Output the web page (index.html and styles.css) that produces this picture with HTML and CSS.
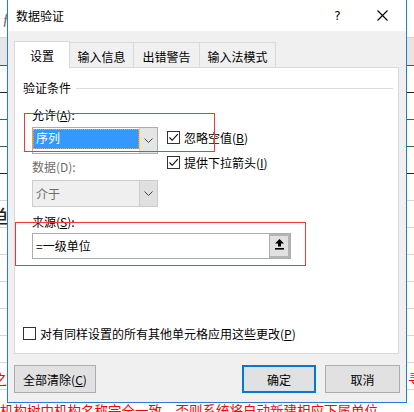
FILE: index.html
```html
<!DOCTYPE html>
<html lang="zh-CN">
<head>
<meta charset="utf-8">
<title>数据验证</title>
<link rel="stylesheet" href="styles.css">
</head>
<body>
<div class="screen">
  <div class="sheet">
    <div class="r-formula"><span class="fx">ƒ</span></div>
    <div class="r-head"></div>
    <div class="r r-dark"></div>
    <div class="r r-green"></div>
    <div class="r r-green"></div>
    <div class="r r-dark"></div>
    <div class="r"></div>
    <div class="r"><span class="big">单</span></div>
    <div class="r"></div>
    <div class="r"></div>
    <div class="r"></div>
    <div class="r"></div>
    <div class="r"></div>
    <div class="r red-row"><span class="red-l">之</span><span class="red-r">寻</span></div>
    <div class="r-text">机构树中机构名称完全一致，否则系统将自动新建相应下属单位</div>
  </div>

  <div class="dialog">
    <div class="titlebar">
      <div class="title">数据验证</div>
      <div class="cap cap-help">?</div>
      <div class="cap cap-close">
        <svg width="11" height="11" viewBox="0 0 11 11"><path d="M0.5 0.5 L10.5 10.5 M10.5 0.5 L0.5 10.5" stroke="#000" stroke-width="1.1" fill="none"/></svg>
      </div>
    </div>
    <div class="body">
      <div class="tabs">
        <div class="tab active">设置</div>
        <div class="tab t2">输入信息</div>
        <div class="tab t3">出错警告</div>
        <div class="tab t4">输入法模式</div>
      </div>
      <div class="panel">
        <div class="group"><span>验证条件</span><div class="rule"></div></div>
        <div class="form">
          <div class="allow-row">
            <div class="col-left">
              <div class="label">允许(<u>A</u>):</div>
              <div class="select s-active">
                <div class="val"><span class="hl">序列</span></div>
                <div class="drop"><svg width="9" height="5" viewBox="0 0 9 5"><path d="M0.5 0.5 L4.5 4.5 L8.5 0.5" stroke="#444" stroke-width="1" fill="none"/></svg></div>
              </div>
              <div class="label label-gap disabled">数据(D):</div>
              <div class="select s-disabled">
                <div class="val"><span class="txt">介于</span></div>
                <div class="drop"><svg width="9" height="5" viewBox="0 0 9 5"><path d="M0.5 0.5 L4.5 4.5 L8.5 0.5" stroke="#444" stroke-width="1" fill="none"/></svg></div>
              </div>
            </div>
            <div class="col-right">
              <div class="check">
                <div class="cb"><svg width="11" height="11" viewBox="0 0 11 11"><path d="M1.5 5.5 L4.2 8.3 L9.8 2.2" stroke="#000" stroke-width="1.1" fill="none"/></svg></div>
                <span>忽略空值(<u>B</u>)</span>
              </div>
              <div class="check check2">
                <div class="cb"><svg width="11" height="11" viewBox="0 0 11 11"><path d="M1.5 5.5 L4.2 8.3 L9.8 2.2" stroke="#000" stroke-width="1.1" fill="none"/></svg></div>
                <span>提供下拉箭头(<u>I</u>)</span>
              </div>
            </div>
          </div>
          <div class="label label-src">来源(<u>S</u>):</div>
          <div class="input">
            <div class="input-text">=一级单位</div>
            <div class="pick">
              <svg width="9" height="11" viewBox="0 0 9 11"><path d="M4.5 0 L9 4.5 H6 V7.5 H3 V4.5 H0 Z" fill="#000"/><rect x="0" y="9" width="9" height="1.6" fill="#000"/></svg>
            </div>
          </div>
        </div>
        <div class="check check-all">
          <div class="cb"></div>
          <span>对有同样设置的所有其他单元格应用这些更改(<u>P</u>)</span>
        </div>
      </div>
      <div class="buttons">
        <div class="btn btn-clear">全部清除(<u>C</u>)</div>
        <div class="btn-group">
          <div class="btn btn-ok">确定</div>
          <div class="btn btn-cancel">取消</div>
        </div>
      </div>
    </div>
  </div>

  <div class="mark mark-allow"></div>
  <div class="mark mark-source"></div>
</div>
</body>
</html>
```

FILE: styles.css
```css
html, body {
  margin: 0;
  padding: 0;
}
body {
  width: 414px;
  height: 412px;
  overflow: hidden;
  background: #fff;
  font-family: "Noto Sans CJK SC", "Microsoft YaHei", "Noto Sans", sans-serif;
  font-size: 12px;
  color: #000;
}
u {
  text-decoration: underline;
  text-underline-offset: 1px;
}
.screen {
  position: relative;
  width: 414px;
  height: 412px;
  overflow: hidden;
}

/* background spreadsheet */
.sheet {
  display: flex;
  flex-direction: column;
  height: 412px;
}
.sheet > div {
  flex: none;
}
.r-formula {
  height: 37px;
  border-bottom: 1px solid #d4d4d4;
  background: #fff;
  display: flex;
  align-items: center;
}
.fx {
  padding-left: 2px;
  font-family: "Liberation Serif", serif;
  font-style: italic;
  font-size: 16px;
  color: #666;
}
.r-head {
  height: 27px;
  background: #e6e6e6;
  border-bottom: 1px solid #1e7145;
}
.r {
  height: 26px;
  border-bottom: 1px solid #d6d6d6;
  display: flex;
  justify-content: space-between;
  align-items: center;
  white-space: nowrap;
}
.r-dark { border-bottom-color: #222; }
.r-green { border-bottom-color: #217346; }
.big {
  font-size: 22px;
  margin-left: -13px;
  margin-top: 4px;
  color: #222;
}
.red-row {
  color: #ff0000;
  font-size: 14px;
}
.red-l { margin-left: -7px; margin-top: 4px; }
.red-r { margin-right: -8px; margin-top: 4px; }
.r-text {
  padding-top: 12px;
  font-size: 13.5px;
  line-height: 16px;
  color: #ff0000;
  white-space: nowrap;
}

/* dialog window */
.dialog {
  position: absolute;
  left: 7px;
  top: 0;
  width: 400px;
  height: 403px;
  box-sizing: border-box;
  border: 1px solid #2b7bd5;
  border-top: none;
  background: #f0f0f0;
  display: flex;
  flex-direction: column;
}
.titlebar {
  height: 31px;
  flex: none;
  background: #fff;
  display: flex;
  align-items: center;
  padding-left: 8px;
}
.title {
  flex: 1;
  line-height: 16px;
}
.cap {
  width: 45px;
  height: 31px;
  display: flex;
  align-items: center;
  justify-content: center;
}
.cap-help {
  font-family: "DejaVu Sans", sans-serif;
  font-size: 12px;
}
.cap-close {
  margin-right: 1px;
}
.body {
  flex: 1;
  padding: 10px 7px 9px 6px;
  display: flex;
  flex-direction: column;
}

/* tabs */
.tabs {
  display: flex;
  align-items: flex-end;
  height: 26px;
  flex: none;
  position: relative;
  z-index: 1;
}
.tab {
  height: 25px;
  box-sizing: border-box;
  border: 1px solid #d9d9d9;
  border-left: none;
  border-bottom: none;
  background: #f0f0f0;
  display: flex;
  align-items: center;
  justify-content: center;
  padding-top: 2px;
}
.tab.active {
  width: 56px;
  height: 27px;
  margin-bottom: -1px;
  background: #fff;
  border-left: 1px solid #d9d9d9;
  padding-top: 1px;
}
.t2 { width: 64px; }
.t3 { width: 66px; }
.t4 { width: 76px; }

/* panel */
.panel {
  height: 287px;
  flex: none;
  box-sizing: border-box;
  border: 1px solid #d9d9d9;
  background: #fff;
  display: flex;
  flex-direction: column;
  padding: 12px 5px 13px 8px;
}
.group {
  display: flex;
  align-items: center;
  height: 16px;
  line-height: 16px;
}
.rule {
  flex: 1;
  height: 1px;
  background: #dcdcdc;
  margin-left: 5px;
}
.form {
  margin-left: 9px;
}
.label {
  height: 16px;
  line-height: 16px;
  margin-top: 11px;
}
.label-gap { margin-top: 5px; }
.label.disabled { color: #6d6d6d; }
.label-src { margin-top: 7px; }
.allow-row {
  display: flex;
}
.col-left {
  width: 126px;
  flex: none;
}
.col-right {
  margin-left: 9px;
  padding-top: 35px;
}

.select {
  height: 27px;
  box-sizing: border-box;
  border: 1px solid #adadad;
  display: flex;
  margin-top: 4px;
}
.s-disabled {
  margin-top: 5px;
  border-color: #cccccc;
  background: #efefef;
}
.s-active { background: #fff; }
.val {
  flex: 1;
  display: flex;
  align-items: flex-start;
}
.hl {
  width: 106px;
  height: 20px;
  margin-top: 1px;
  box-sizing: border-box;
  background: #3399ff;
  color: #fff;
  line-height: 18px;
  padding-left: 3px;
  outline: 1px dotted #f0a040;
  outline-offset: -1px;
}
.txt {
  color: #6d6d6d;
  padding-left: 3px;
  line-height: 25px;
}
.drop {
  width: 18px;
  flex: none;
  box-sizing: border-box;
  background: #e5e5e5;
  border-left: 1px solid #cfcfcf;
  display: flex;
  align-items: center;
  justify-content: center;
}
.s-disabled .drop { background: #e0e0e0; border-left-color: #cccccc; }

.check {
  display: flex;
  align-items: center;
  height: 13px;
  line-height: 13px;
  white-space: nowrap;
}
.check2 { margin-top: 12px; }
.cb {
  width: 13px;
  height: 13px;
  box-sizing: border-box;
  border: 1px solid #333;
  background: #fff;
  margin-right: 4px;
  flex: none;
  display: flex;
  align-items: center;
  justify-content: center;
}
.check-all {
  margin-top: auto;
}

.input {
  height: 26px;
  width: 259px;
  box-sizing: border-box;
  border: 1px solid #adadad;
  background: #fff;
  display: flex;
  margin-top: 3px;
}
.input-text {
  flex: 1;
  padding-left: 3px;
  line-height: 24px;
}
.pick {
  width: 21px;
  flex: none;
  box-sizing: border-box;
  border: 2px solid #b4b4b4;
  border-left: 1px solid #adadad;
  background: #e1e1e1;
  display: flex;
  justify-content: center;
  align-items: flex-start;
  padding-top: 3px;
}

/* buttons */
.buttons {
  display: flex;
  justify-content: space-between;
  margin-top: 11px;
  margin-right: -1px;
}
.btn-group {
  display: flex;
  gap: 9px;
}
.btn {
  height: 28px;
  box-sizing: border-box;
  border: 1px solid #adadad;
  background: #e1e1e1;
  display: flex;
  align-items: center;
  justify-content: center;
}
.btn-clear { width: 82px; }
.btn-ok { width: 74px; border: 2px solid #0078d7; }
.btn-cancel { width: 75px; }

/* red annotation rectangles */
.mark {
  position: absolute;
  box-sizing: border-box;
  border: 1px solid #f03a3a;
}
.mark-allow {
  left: 24px;
  top: 113px;
  width: 191px;
  height: 39px;
}
.mark-source {
  left: 15px;
  top: 222px;
  width: 291px;
  height: 44px;
}
```
